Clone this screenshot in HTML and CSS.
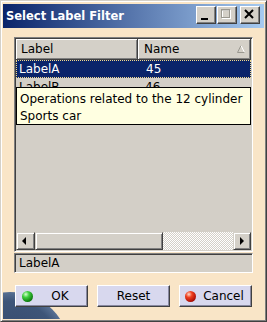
FILE: index.html
```html
<!DOCTYPE html>
<html>
<head>
<meta charset="utf-8">
<link rel="stylesheet" href="styles.css">
</head>
<body>
<div class="window">
  <div class="titlebar">
    <span class="title">Select Label Filter</span>
    <div class="tbtns">
      <div class="tbtn"><svg width="20" height="18" viewBox="0 0 20 18"><rect x="5" y="12" width="7" height="2" fill="#000"/></svg></div>
      <div class="tbtn"><svg width="20" height="18" viewBox="0 0 20 18"><rect x="5.5" y="4.5" width="8" height="8" fill="none" stroke="#fff"/><rect x="4.5" y="3.5" width="8" height="8" fill="none" stroke="#9a9890"/><rect x="4.5" y="3.5" width="8" height="1" fill="#9a9890"/></svg></div>
      <div class="tbtn close"><svg width="20" height="18" viewBox="0 0 20 18"><path d="M5 4 L13 12 M13 4 L5 12" stroke="#000" stroke-width="2"/></svg></div>
    </div>
  </div>
  <div class="body">
    <div class="globe"></div>
    <div class="list">
      <div class="header">
        <div class="hcell c1">Label</div>
        <div class="hcell c2">Name<svg class="sort" width="8" height="8" viewBox="0 0 8 8"><path d="M4 0.5 L7.5 7.5" stroke="#fff" fill="none"/><path d="M4 0.5 L0.5 7.5 L7.5 7.5" stroke="#9a9890" fill="none"/></svg></div>
      </div>
      <div class="rows">
        <div class="row sel"><span class="c1">LabelA</span><span class="c2">45</span></div>
        <div class="row"><span class="c1">LabelB</span><span class="c2">46</span></div>
      </div>
      <div class="hscroll">
        <div class="sbtn left"><svg width="17" height="16" viewBox="0 0 17 16"><path d="M5 8 L9 4 L9 12 Z" fill="#000"/></svg></div>
        <div class="thumb"></div>
        <div class="track"></div>
        <div class="sbtn right"><svg width="16" height="16" viewBox="0 0 16 16"><path d="M10 8 L6 4 L6 12 Z" fill="#000"/></svg></div>
      </div>
      <div class="tooltip">Operations related to the 12 cylinder<br>Sports car</div>
    </div>
    <div class="field">LabelA</div>
    <div class="buttons">
      <div class="btn ok"><span class="ball green"></span><span class="lbl">OK</span></div>
      <div class="btn"><span class="lbl">Reset</span></div>
      <div class="btn cancel"><span class="ball red"></span><span class="lbl">Cancel</span></div>
    </div>
  </div>
</div>
</body>
</html>
```

FILE: styles.css
```css
* { box-sizing: border-box; }
html, body { margin: 0; padding: 0; }
body {
  width: 267px;
  height: 322px;
  overflow: hidden;
  font-family: "DejaVu Sans", "Noto Sans", sans-serif;
  font-size: 12px;
  color: #000;
}
.window {
  width: 267px;
  height: 322px;
  background: #f9e5c7;
  border: 1px solid;
  border-color: #d4d0c8 #404040 #404040 #d4d0c8;
  box-shadow: inset 1px 1px #fff, inset -1px -1px #808080;
  padding: 3px 2px 2px 2px;
  display: flex;
  flex-direction: column;
}
.titlebar {
  height: 24px;
  flex: none;
  background: linear-gradient(to right, #0a246a, #a6caf0);
  display: flex;
  align-items: flex-start;
  padding: 0 4px 0 3px;
}
.title {
  color: #fff;
  font-weight: bold;
  font-size: 11.5px;
  line-height: 24px;
  flex: 1;
  white-space: nowrap;
}
.tbtns {
  display: flex;
  margin-top: 2px;
}
.tbtn {
  width: 20px;
  height: 18px;
  background: #d4d0c8;
  border: 1px solid;
  border-color: #fff #404040 #404040 #fff;
  box-shadow: inset -1px -1px #808080;
  position: relative;
}
.tbtn + .tbtn { margin-left: 1px; }
.tbtn.close { margin-left: 3px; }
.tbtn svg { position: absolute; left: -1px; top: -1px; }
.body {
  flex: 1;
  position: relative;
  overflow: hidden;
  padding: 9px 11px 0 11px;
  display: flex;
  flex-direction: column;
}
.globe {
  position: absolute;
  left: -53px;
  top: 264px;
  width: 120px;
  height: 120px;
  border-radius: 50%;
  background: radial-gradient(circle at 50% 50%, #34476a 0, #3e5578 60%, #6f88aa 80%, #b4c4d8 90%, rgba(249,229,199,0) 100%);
}
.list {
  position: relative;
  height: 215px;
  flex: none;
  border: 1px solid;
  border-color: #808080 #fff #fff #808080;
  box-shadow: inset 1px 1px #404040, inset -1px -1px #d4d0c8;
  padding: 1px;
  background: #d3cfc7;
  display: flex;
  flex-direction: column;
}
.header {
  height: 21px;
  display: flex;
  flex: none;
}
.hcell {
  background: #d4d0c8;
  border-right: 1px solid #404040;
  border-bottom: 1px solid #404040;
  box-shadow: inset 1px 1px #fff, inset -1px -1px #808080;
  display: flex;
  align-items: center;
  position: relative;
}
.hcell.c1 { width: 122px; padding-left: 5px; }
.hcell.c2 { flex: 1; padding-left: 6px; }
.sort { position: absolute; right: 5px; top: 6px; }
.rows { flex: 1; }
.row {
  height: 18px;
  display: flex;
  align-items: center;
}
.row .c1 { width: 122px; padding-left: 3px; }
.row .c2 { padding-left: 7px; }
.row.sel {
  background: #0a246a;
  color: #fff;
  border: 1px dotted #f2d98c;
}
.row.sel .c1 { padding-left: 2px; }
.hscroll {
  height: 18px;
  flex: none;
  display: flex;
}
.sbtn, .thumb {
  background: #d4d0c8;
  border: 1px solid;
  border-color: #d4d0c8 #404040 #404040 #d4d0c8;
  box-shadow: inset 1px 1px #fff, inset -1px -1px #808080;
}
.sbtn.left { width: 19px; }
.sbtn.right { width: 18px; }
.thumb { width: 128px; }
.track {
  flex: 1;
  background: repeating-conic-gradient(#fff 0 25%, #d4d0c8 0 50%) 0 0 / 2px 2px;
}
.tooltip {
  position: absolute;
  left: 1px;
  top: 49px;
  width: 235px;
  height: 38px;
  background: #ffffe1;
  border: 1px solid #000;
  padding: 3px 0 0 3px;
  line-height: 17px;
  white-space: nowrap;
}
.field {
  margin-top: 1px;
  height: 20px;
  flex: none;
  border: 1px solid;
  border-color: #808080 #fff #fff #808080;
  box-shadow: inset 1px 1px #404040;
  background: #d3cfc7;
  padding-left: 4px;
  display: flex;
  align-items: center;
}
.buttons {
  margin-top: 12px;
  display: flex;
  gap: 9px;
  padding-left: 1px;
  position: relative;
}
.btn {
  width: 73px;
  height: 22px;
  background: #d8d8ee;
  border: 1px solid;
  border-color: #fff #404040 #404040 #fff;
  box-shadow: inset -1px -1px #8888a0;
  display: flex;
  align-items: center;
}
.btn .lbl { flex: 1; text-align: center; }
.btn.ok { padding-left: 6px; }
.btn.cancel { padding-left: 5px; }
.ball {
  width: 11px;
  height: 11px;
  border-radius: 50%;
  flex: none;
}
.ball.green { background: radial-gradient(circle at 35% 30%, #d8ffd0 0, #40d040 30%, #108010 70%, #064006 100%); }
.ball.red { background: radial-gradient(circle at 35% 30%, #ffd8c8 0, #f04020 30%, #b01008 70%, #500000 100%); }
```
